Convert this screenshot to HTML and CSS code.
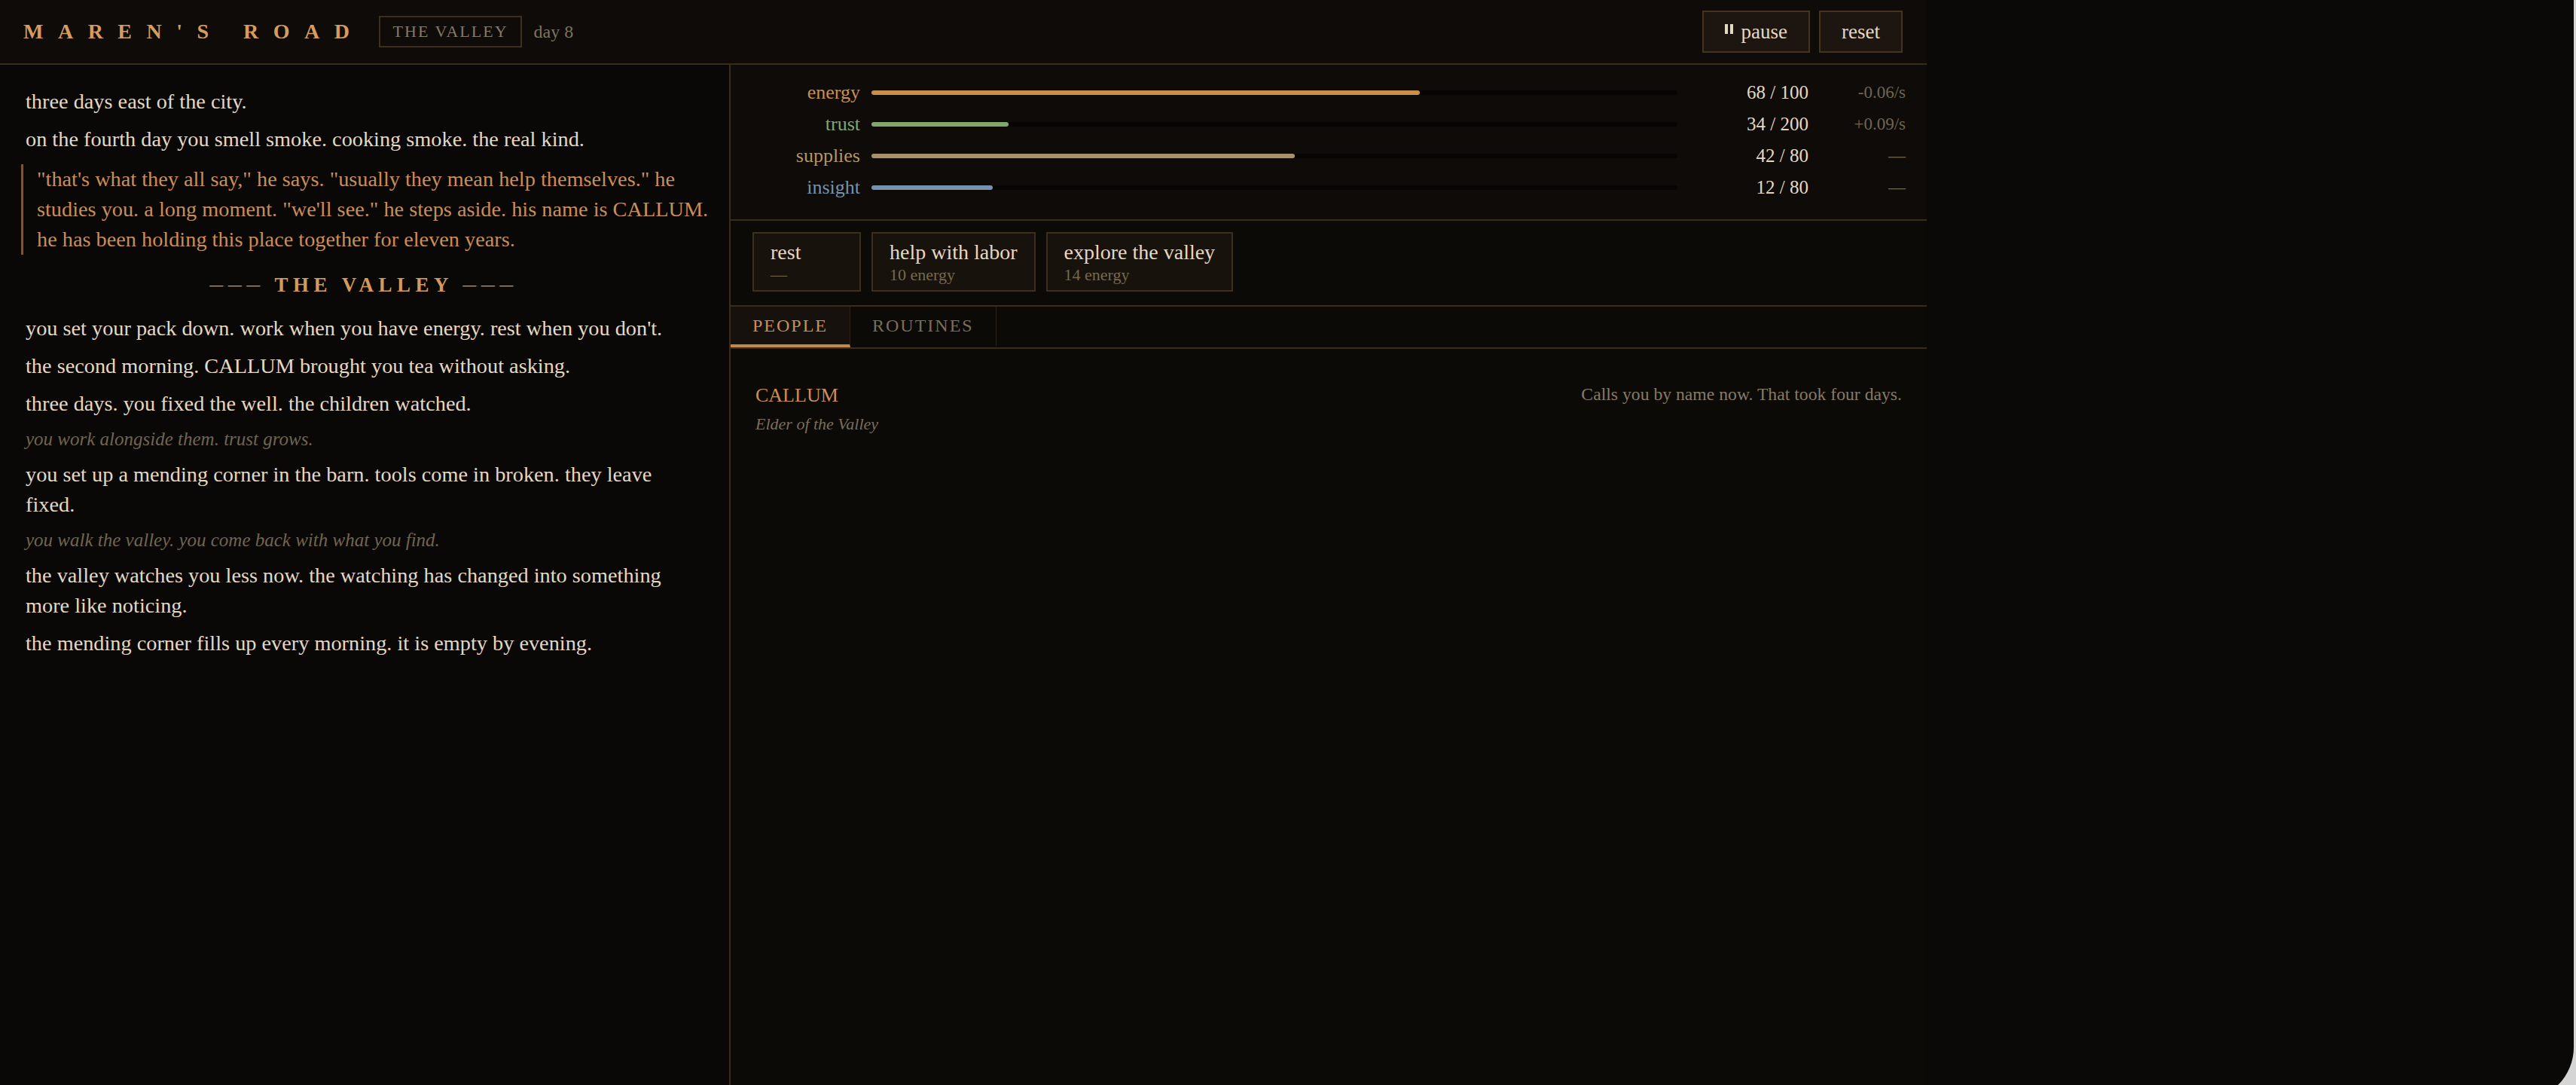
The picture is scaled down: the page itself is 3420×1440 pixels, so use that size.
FILE: index.html
```html
<!DOCTYPE html>
<html lang="en">
<head>
<meta charset="utf-8">
<title>Maren's Road</title>
<link rel="stylesheet" href="styles.css">
</head>
<body>
<div class="window">
  <div class="app">
    <header class="topbar">
      <div class="brand">
        <span class="title">MAREN'S ROAD</span>
        <span class="badge">THE VALLEY</span>
        <span class="day">day 8</span>
      </div>
      <div class="controls">
        <button class="btn"><svg class="pause-ico" width="12" height="14" viewBox="0 0 12 14"><rect x="0" y="0" width="4" height="13" fill="#e3d8c3"/><rect x="7" y="0" width="4" height="13" fill="#e3d8c3"/></svg>pause</button>
        <button class="btn">reset</button>
      </div>
    </header>
    <main class="main">
      <section class="log">
        <p>three days east of the city.</p>
        <p>on the fourth day you smell smoke. cooking smoke. the real kind.</p>
        <p class="quote">"that's what they all say," he says. "usually they mean help themselves." he studies you. a long moment. "we'll see." he steps aside. his name is CALLUM. he has been holding this place together for eleven years.</p>
        <h2 class="chapter"><span class="dash">———</span> THE VALLEY <span class="dash">———</span></h2>
        <p>you set your pack down. work when you have energy. rest when you don't.</p>
        <p>the second morning. CALLUM brought you tea without asking.</p>
        <p>three days. you fixed the well. the children watched.</p>
        <p class="note">you work alongside them. trust grows.</p>
        <p>you set up a mending corner in the barn. tools come in broken. they leave fixed.</p>
        <p class="note">you walk the valley. you come back with what you find.</p>
        <p>the valley watches you less now. the watching has changed into something more like noticing.</p>
        <p>the mending corner fills up every morning. it is empty by evening.</p>
      </section>
      <section class="side">
        <div class="stats">
          <div class="stat energy">
            <span class="label">energy</span>
            <div class="track"><div class="fill" style="width:68%"></div></div>
            <span class="val">68 / 100</span>
            <span class="rate">-0.06/s</span>
          </div>
          <div class="stat trust">
            <span class="label">trust</span>
            <div class="track"><div class="fill" style="width:17%"></div></div>
            <span class="val">34 / 200</span>
            <span class="rate">+0.09/s</span>
          </div>
          <div class="stat supplies">
            <span class="label">supplies</span>
            <div class="track"><div class="fill" style="width:52.5%"></div></div>
            <span class="val">42 / 80</span>
            <span class="rate">—</span>
          </div>
          <div class="stat insight">
            <span class="label">insight</span>
            <div class="track"><div class="fill" style="width:15%"></div></div>
            <span class="val">12 / 80</span>
            <span class="rate">—</span>
          </div>
        </div>
        <div class="actions">
          <button class="act"><span class="act-t">rest</span><span class="act-s">—</span></button>
          <button class="act"><span class="act-t">help with labor</span><span class="act-s">10 energy</span></button>
          <button class="act"><span class="act-t">explore the valley</span><span class="act-s">14 energy</span></button>
        </div>
        <nav class="tabs">
          <div class="tab active">PEOPLE</div>
          <div class="tab">ROUTINES</div>
        </nav>
        <div class="panel">
          <div class="person">
            <div class="pinfo">
              <div class="pname">CALLUM</div>
              <div class="prole">Elder of the Valley</div>
            </div>
            <div class="pnote">Calls you by name now. That took four days.</div>
          </div>
        </div>
      </section>
    </main>
  </div>
</div>
</body>
</html>
```

FILE: styles.css
```css
* { box-sizing: border-box; }
html, body { margin: 0; height: 100%; }
body {
  background: #d5d5d5;
  overflow: hidden;
  font-family: "Liberation Serif", "Times New Roman", serif;
}
.window {
  width: 3417px;
  height: 1460px;
  background: #0b0907;
  border-bottom-right-radius: 70px;
  overflow: hidden;
}
.app {
  width: 2558px;
  height: 1440px;
  display: flex;
  flex-direction: column;
}
.topbar {
  height: 86px;
  flex: none;
  border-bottom: 2px solid #3a2c1d;
  background: #0e0b08;
  display: flex;
  align-items: center;
  justify-content: space-between;
  padding: 0 32px 0 31px;
}
.brand { display: flex; align-items: center; }
.title {
  font-weight: bold;
  font-size: 28px;
  letter-spacing: 19.5px;
  color: #d59c61;
}
.badge {
  margin-left: 19px;
  height: 42px;
  border: 2px solid #3d2f20;
  padding: 0 16px 0 17px;
  display: flex;
  align-items: center;
  font-size: 22px;
  letter-spacing: 2px;
  color: #857a66;
}
.day { margin-left: 16px; font-size: 24px; color: #7d735f; }
.controls { display: flex; gap: 12px; }
.btn {
  font-family: inherit;
  height: 56px;
  padding: 0 28px;
  border: 2px solid #43331f;
  background: #1c1510;
  color: #e3d8c3;
  font-size: 27px;
  display: flex;
  align-items: center;
  gap: 10px;
}
.pause-ico { margin-top: -6px; }

.main {
  flex: 1;
  min-height: 0;
  display: grid;
  grid-template-columns: 970px 1fr;
}
.log {
  border-right: 2px solid #3a2c1d;
  background: #0a0806;
  padding: 29px 36px 29px 34px;
  color: #e3d8c3;
  font-size: 28.3px;
  line-height: 40px;
}
.log p { margin: 0 0 10px; }
.log .quote {
  margin: 13px -14px 20px -6px;
  border-left: 3px solid #7a5634;
  padding-left: 18px;
  color: #c88e58;
}
.chapter {
  margin: 20px 0 15px;
  text-align: center;
  font-size: 27px;
  line-height: 40px;
  font-weight: bold;
  letter-spacing: 6.5px;
  color: #d39a5d;
}
.dash { font-size: 18px; position: relative; top: -3px; }
.log .note {
  font-style: italic;
  font-size: 25px;
  line-height: 34px;
  color: #6f6550;
}

.side {
  display: flex;
  flex-direction: column;
  background: #0c0a07;
}
.stats {
  padding: 16px 28px 21px 32px;
  border-bottom: 2px solid #3a2c1d;
  background: #0e0b08;
}
.stat {
  height: 42px;
  display: grid;
  grid-template-columns: 140px 1fr 159px 114px;
  column-gap: 15px;
  align-items: center;
}
.label { text-align: right; font-size: 26px; }
.track { height: 6px; border-radius: 3px; background: #060504; }
.fill { height: 100%; border-radius: 3px; }
.val { text-align: right; font-size: 25px; color: #e3d8c3; }
.rate { text-align: right; font-size: 23px; color: #6e6555; }
.energy .label { color: #c8904a; }
.energy .fill { background: #c8904a; }
.trust .label { color: #82a86c; }
.trust .fill { background: #82a86c; }
.supplies .label { color: #b39664; }
.supplies .fill { background: #a8916a; }
.insight .label { color: #7393b0; }
.insight .fill { background: #7393b0; }

.actions {
  display: flex;
  gap: 14px;
  padding: 15px 29px 18px;
  border-bottom: 2px solid #3a2c1d;
}
.act {
  min-width: 144px;
  border: 2px solid #3d2f20;
  background: #18120d;
  padding: 9px 22px 6px;
  display: flex;
  flex-direction: column;
  align-items: flex-start;
  font-family: inherit;
  text-align: left;
}
.act-t { font-size: 28px; line-height: 32px; color: #e3d8c3; }
.act-s { font-size: 22px; line-height: 28px; color: #75694f; }

.tabs {
  display: flex;
  height: 56px;
  flex: none;
  border-bottom: 2px solid #3a2c1d;
}
.tab {
  padding: 0 29px;
  display: flex;
  align-items: center;
  font-size: 24px;
  letter-spacing: 2px;
  color: #7a6e5a;
  border-right: 1px solid #2c2218;
  border-bottom: 4px solid transparent;
}
.tab.active {
  color: #c89058;
  background: #16110c;
  border-bottom-color: #c08850;
}
.panel { padding: 46px 33px; }
.person {
  display: flex;
  justify-content: space-between;
  align-items: flex-start;
}
.pname { font-size: 26px; line-height: 32px; color: #c89058; }
.prole {
  margin-top: 8px;
  font-style: italic;
  font-size: 22px;
  line-height: 28px;
  color: #7a6e5a;
}
.pnote { font-size: 23.7px; line-height: 28px; color: #857a66; }
```
